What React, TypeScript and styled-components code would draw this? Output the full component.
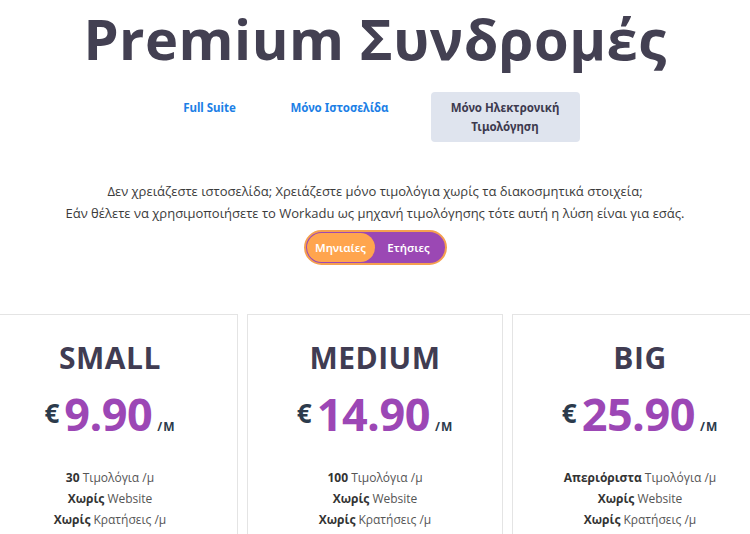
import { useState } from 'react';
import styled, { createGlobalStyle } from 'styled-components';

const GlobalStyle = createGlobalStyle`
    html, body {
        margin: 0;
        padding: 0;
        background: #ffffff;
        overflow: hidden;
    }
    body {
        font-family: "Open Sans", "Noto Sans", "DejaVu Sans", sans-serif;
        color: #3a3a3a;
    }
`;

const Page = styled.div`
    width: 750px;
    height: 534px;
    overflow: hidden;
    display: flex;
    flex-direction: column;
    align-items: center;
`;

const Title = styled.h1`
    margin: 0;
    font-size: 56px;
    line-height: 76px;
    font-weight: 700;
    color: #434052;
    letter-spacing: 0.5px;
`;

const Tabs = styled.div`
    display: flex;
    gap: 20px;
    margin-top: 16px;
    height: 50px;
`;

const Tab = styled.button<{ $active?: boolean; $width: number }>`
    width: ${(p) => p.$width}px;
    height: 50px;
    border: none;
    border-radius: 4px;
    padding: 0;
    background: ${(p) => (p.$active ? '#dfe4ee' : 'transparent')};
    color: ${(p) => (p.$active ? '#3d3a4e' : '#1c7fe6')};
    font-family: "Noto Sans", "Open Sans", sans-serif;
    font-weight: 700;
    font-size: 11.5px;
    line-height: 19px;
    text-align: center;
    display: flex;
    align-items: ${(p) => (p.$active ? 'center' : 'flex-start')};
    justify-content: center;
    padding-top: ${(p) => (p.$active ? '0' : '6px')};
    cursor: pointer;
`;

const Description = styled.p`
    margin: 38px 0 0;
    font-size: 13px;
    line-height: 22px;
    text-align: center;
    color: #3b3b3b;
`;

const Toggle = styled.div`
    margin-top: 6px;
    width: 137px;
    height: 32px;
    padding: 1px;
    border: 2px solid #f5a04f;
    border-radius: 19px;
    background: #9b48b4;
    display: flex;
    align-items: center;
`;

const ToggleOption = styled.button<{ $active?: boolean }>`
    flex: 0 0 68px;
    height: 29px;
    border: none;
    border-radius: 15px;
    background: ${(p) => (p.$active ? '#ffa54e' : 'transparent')};
    color: #ffffff;
    font-family: "Noto Sans", "Open Sans", sans-serif;
    font-size: 11.5px;
    font-weight: 600;
    padding: 0;
    cursor: pointer;
`;

const Cards = styled.div`
    margin-top: 49px;
    display: flex;
    justify-content: center;
    gap: 9px;
    width: 786px;
    flex-shrink: 0;
`;

const Card = styled.div`
    width: 256px;
    flex-shrink: 0;
    height: 240px;
    border: 1px solid #e4e4e4;
    border-bottom: none;
    box-sizing: border-box;
    padding-top: 25px;
    display: flex;
    flex-direction: column;
    align-items: center;
`;

const PlanName = styled.h2`
    margin: 0;
    font-size: 30px;
    line-height: 36px;
    font-weight: 700;
    color: #403c52;
    letter-spacing: 0.5px;
`;

const Price = styled.div`
    margin-top: 12px;
    line-height: 52px;
    display: flex;
    align-items: baseline;
    gap: 5px;
`;

const Currency = styled.span`
    font-size: 26px;
    font-weight: 700;
    color: #2c3b4c;
    position: relative;
    top: -8px;
`;

const Amount = styled.span`
    font-size: 45px;
    font-weight: 700;
    color: #9c47b5;
    letter-spacing: -0.5px;
`;

const Per = styled.span`
    font-size: 12px;
    font-weight: 700;
    color: #2c3b4c;
    letter-spacing: 1px;
`;

const Features = styled.ul`
    list-style: none;
    margin: 14px 0 0;
    padding: 0;
    text-align: center;
    font-size: 12px;
    line-height: 21px;
    color: #555555;

    strong {
        color: #333333;
        font-weight: 700;
    }
`;

const plans = [
    { name: 'SMALL', price: '9.90', invoices: '30' },
    { name: 'MEDIUM', price: '14.90', invoices: '100' },
    { name: 'BIG', price: '25.90', invoices: 'Απεριόριστα' },
];

const tabs = [
    { label: 'Full Suite', width: 78 },
    { label: 'Μόνο Ιστοσελίδα', width: 142 },
    { label: 'Μόνο Ηλεκτρονική Τιμολόγηση', width: 149 },
];

const App = () => {
    const [tab, setTab] = useState(2);
    const [monthly, setMonthly] = useState(true);

    return (
        <Page>
            <GlobalStyle />
            <Title>Premium Συνδρομές</Title>

            <Tabs>
                {tabs.map((t, i) => (
                    <Tab key={t.label} $width={t.width} $active={tab === i} onClick={() => setTab(i)}>
                        {i === 2 ? (
                            <span>
                                Μόνο Ηλεκτρονική
                                <br />
                                Τιμολόγηση
                            </span>
                        ) : (
                            t.label
                        )}
                    </Tab>
                ))}
            </Tabs>

            <Description>
                Δεν χρειάζεστε ιστοσελίδα; Χρειάζεστε μόνο τιμολόγια χωρίς τα διακοσμητικά στοιχεία;
                <br />
                Εάν θέλετε να χρησιμοποιήσετε το Workadu ως μηχανή τιμολόγησης τότε αυτή η λύση είναι για εσάς.
            </Description>

            <Toggle>
                <ToggleOption $active={monthly} onClick={() => setMonthly(true)}>Μηνιαίες</ToggleOption>
                <ToggleOption $active={!monthly} onClick={() => setMonthly(false)}>Ετήσιες</ToggleOption>
            </Toggle>

            <Cards>
                {plans.map((plan) => (
                    <Card key={plan.name}>
                        <PlanName>{plan.name}</PlanName>
                        <Price>
                            <Currency>€</Currency>
                            <Amount>{plan.price}</Amount>
                            <Per>/M</Per>
                        </Price>
                        <Features>
                            <li><strong>{plan.invoices}</strong> Τιμολόγια /μ</li>
                            <li><strong>Χωρίς</strong> Website</li>
                            <li><strong>Χωρίς</strong> Κρατήσεις /μ</li>
                        </Features>
                    </Card>
                ))}
            </Cards>
        </Page>
    );
};

export default App;
